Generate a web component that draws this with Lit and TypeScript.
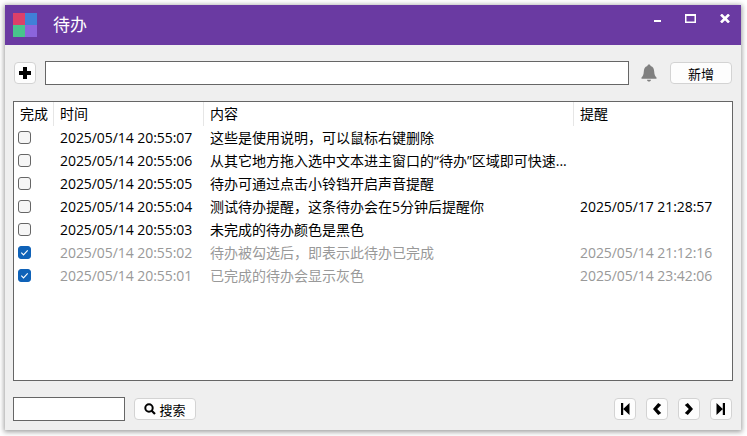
import { LitElement, html, css, svg } from "lit";
import { customElement } from "lit/decorators.js";

const rows = [
  ["2025/05/14 20:55:07", "这些是使用说明，可以鼠标右键删除", "", false],
  ["2025/05/14 20:55:06", "从其它地方拖入选中文本进主窗口的“待办”区域即可快速...", "", false],
  ["2025/05/14 20:55:05", "待办可通过点击小铃铛开启声音提醒", "", false],
  ["2025/05/14 20:55:04", "测试待办提醒，这条待办会在5分钟后提醒你", "2025/05/17 21:28:57", false],
  ["2025/05/14 20:55:03", "未完成的待办颜色是黑色", "", false],
  ["2025/05/14 20:55:02", "待办被勾选后，即表示此待办已完成", "2025/05/14 21:12:16", true],
  ["2025/05/14 20:55:01", "已完成的待办会显示灰色", "2025/05/14 23:42:06", true],
] as const;

@customElement("app-root")
export class AppRoot extends LitElement {
  static styles = css`
    :host { display: block; width: 747px; height: 436px; overflow: hidden; background: #fff;
      font-family: "Open Sans", "Noto Sans CJK SC", sans-serif; font-size: 14px; color: #000; }
    * { box-sizing: border-box; }
    .win { margin: 5px 0 0 5px; width: 736px; height: 425px; background: #efefef; display: flex; flex-direction: column;
      box-shadow: 0 1px 5px 1px rgba(0,0,0,.38); }
    .title { height: 40px; flex: none; background: #6a3aa2; display: flex; align-items: center; padding-left: 8px; color: #fff; }
    .logo { width: 24px; height: 24px; flex: none; display: grid; grid-template-columns: 12px 12px; grid-template-rows: 12px 12px; }
    .l1 { background: #dc4069; } .l2 { background: #4080d8; } .l3 { background: #48c48c; } .l4 { background: #8c64dc; }
    .name { margin-left: 16px; font-size: 17px; line-height: 24px; }
    .caps { margin-left: auto; display: flex; align-items: flex-start; height: 40px; padding: 9px 11px 0 0; }
    .caps svg { display: block; }
    .cap1, .cap2 { margin-right: 24px; }
    .bar { height: 24px; margin: 16px 9px 0 9px; display: flex; align-items: center; flex: none; }
    .btn { background: #fdfdfd; border: 1px solid #d3d3d3; border-radius: 4px; display: flex; align-items: center; justify-content: center; height: 22px; padding: 0; font: inherit; color: #000; }
    .plus { width: 22px; margin-right: 9px; }
    .input { background: #fff; border: 1px solid #666; height: 24px; }
    .main { width: 584px; }
    .bell { margin: 0 12px 0 11px; width: 18px; height: 18px; display: block; }
    .add { width: 62px; font-size: 13px; }
    .table { flex: none; margin: 16px 8px 0 8px; height: 280px; background: #fff; border: 1px solid #666; display: flex; flex-direction: column; }
    .row { display: grid; grid-template-columns: 40px 150px 370px 1fr; height: 23px; align-items: center; white-space: nowrap; }
    .head { height: 24px; }
    .head div { height: 24px; line-height: 24px; border-right: 1px solid #e6e6e6; padding-left: 6px; }
    .head div:last-child { border: none; }
    .cell { padding-left: 6px; overflow: hidden; line-height: 23px; }
    .time { letter-spacing: -0.06px; }
    .done { color: #999; }
    .ck { width: 13px; height: 13px; border: 1px solid #666; border-radius: 3px; background: #f6f6f6; margin-left: 4px; display: block; }
    .ck.on { background: #0f62b8; border-color: #0f62b8; }
    .ck svg { display: block; }
    .foot { flex: none; margin: 16px 9px 0 8px; display: flex; align-items: center; height: 24px; }
    .search-in { width: 112px; }
    .search { width: 62px; margin-left: 9px; font-size: 13px; gap: 3px; }
    .nav { margin-left: auto; display: flex; gap: 10px; }
    .nav .btn { width: 22px; }
  `;

  private ic(d: string, w = 12) {
    return html`<svg width=${w} height=${w} viewBox="0 0 12 12">${svg`<path d=${d} fill="#000"></path>`}</svg>`;
  }

  render() {
    return html`<div class="win">
      <div class="title">
        <div class="logo"><i class="l1"></i><i class="l2"></i><i class="l3"></i><i class="l4"></i></div>
        <div class="name">待办</div>
        <div class="caps">
          <svg class="cap1" width="7" height="9" viewBox="0 0 7 9"><rect x="0" y="6" width="7" height="2" fill="#fff"/></svg>
          <svg class="cap2" width="11" height="9" viewBox="0 0 11 9"><path d="M0 0h11v9H0z M1.500 2v5.500h8V2z" fill="#fff" fill-rule="evenodd"/></svg>
          <svg width="10" height="9" viewBox="0 0 10 9"><path d="M1 .5l8 8M9 .5l-8 8" stroke="#fff" stroke-width="2.600"/></svg>
        </div>
      </div>
      <div class="bar">
        <button class="btn plus">${this.ic("M4 0h4v4h4v4H8v4H4V8H0V4h4z", 12)}</button>
        <div class="input main"></div>
        <svg class="bell" viewBox="0 0 18 18"><path d="M9 0.500c1 0 1.600.7 1.600 1.500 2.600.7 3.500 3 3.600 5.400.1 3 1 4.800 2.300 6.100v1.300H1.500v-1.300C2.800 12.200 3.700 10.400 3.800 7.400 3.900 5 4.800 2.700 7.400 2 7.400 1.200 8 .5 9 .5zM7 15.800h4c0 1-.9 1.800-2 1.800s-2-.8-2-1.800z" fill="#808080"/></svg>
        <button class="btn add">新增</button>
      </div>
      <div class="table">
        <div class="row head"><div>完成</div><div>时间</div><div>内容</div><div>提醒</div></div>
        ${rows.map(([t, c, r, d]) => html`<div class="row ${d ? "done" : ""}">
          <div>${d
            ? html`<span class="ck on"><svg width="11" height="11" viewBox="0 0 11 11"><path d="M2.300 5.700l2.200 2.200 4.200-4.600" fill="none" stroke="#fff" stroke-width="1.100"/></svg></span>`
            : html`<span class="ck"></span>`}</div>
          <div class="cell time">${t}</div><div class="cell">${c}</div><div class="cell time">${r}</div>
        </div>`)}
      </div>
      <div class="foot">
        <div class="input search-in"></div>
        <button class="btn search">
          <svg width="12" height="12" viewBox="0 0 12 12"><circle cx="5" cy="5" r="3.700" fill="none" stroke="#000" stroke-width="2"/><path d="M7.500 7.500l3.500 3.500" stroke="#000" stroke-width="2.200"/></svg>
          <span>搜索</span>
        </button>
        <div class="nav">
          <button class="btn">${this.ic("M2 0h2.200v12H2z M10.500 0v12L4.200 6z")}</button>
          <button class="btn">${this.ic("M7.200 0l3 2L6.200 6l4 4-3 2L2 6z")}</button>
          <button class="btn">${this.ic("M4.800 0l-3 2L5.800 6l-4 4 3 2L10 6z")}</button>
          <button class="btn">${this.ic("M7.800 0H10v12H7.800z M1.500 0v12L7.800 6z")}</button>
        </div>
      </div>
    </div>`;
  }
}
